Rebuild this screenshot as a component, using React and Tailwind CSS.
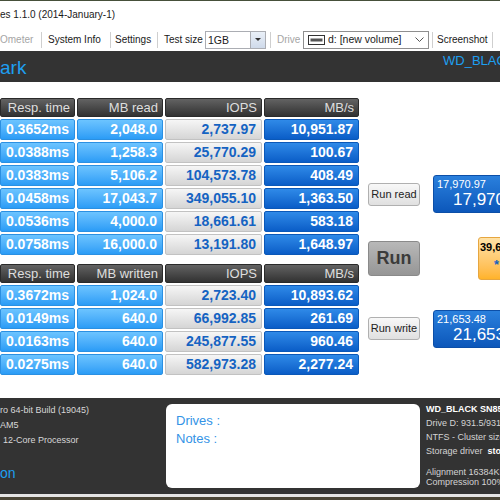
const readRows = [
  ['0.3652ms', '2,048.0', '2,737.97', '10,951.87'],
  ['0.0388ms', '1,258.3', '25,770.29', '100.67'],
  ['0.0383ms', '5,106.2', '104,573.78', '408.49'],
  ['0.0458ms', '17,043.7', '349,055.10', '1,363.50'],
  ['0.0536ms', '4,000.0', '18,661.61', '583.18'],
  ['0.0758ms', '16,000.0', '13,191.80', '1,648.97'],
];

const writeRows = [
  ['0.3672ms', '1,024.0', '2,723.40', '10,893.62'],
  ['0.0149ms', '640.0', '66,992.85', '261.69'],
  ['0.0163ms', '640.0', '245,877.55', '960.46'],
  ['0.0275ms', '640.0', '582,973.28', '2,277.24'],
];

const cellBase = 'h-[21px] flex items-center justify-end pr-[5px] rounded-[2px] border text-[14px] font-bold';
const cellStyles = [
  'bg-linear-to-b from-[#6cc4ff] to-[#2a9cf6] border-[#2b90e2] text-white',
  'bg-linear-to-b from-[#6cc4ff] to-[#2a9cf6] border-[#2b90e2] text-white',
  'bg-linear-to-b from-[#f6f6f6] to-[#d5d5d5] border-[#c2c2c2] text-[#1563c2]',
  'bg-linear-to-b from-[#2f8ae8] to-[#0a5dc7] border-[#0b58b8] text-white',
];

function Sep() {
  return <div className="w-px h-[16px] bg-[#cfcfcf] shrink-0" />;
}

function ResultTable({ headers, rows }) {
  return (
    <div className="grid grid-cols-[75px_86px_97px_95px] gap-x-[2px] gap-y-[2px]">
      {headers.map((h) => (
        <div
          key={h}
          className="h-[19px] flex items-center justify-end pr-[4px] rounded-[2px] border border-[#2a2a2a] bg-linear-to-b from-[#636363] to-[#323232] text-[13px] text-[#dedede]"
        >
          {h}
        </div>
      ))}
      {rows.map((row, i) =>
        row.map((v, j) => (
          <div key={i + '-' + j} className={cellBase + ' ' + cellStyles[j]}>
            {v}
          </div>
        ))
      )}
    </div>
  );
}

function SmallButton({ label }) {
  return (
    <div className="w-[52px] h-[23px] shrink-0 flex items-center justify-center rounded-[3px] border border-[#b0b0b0] bg-linear-to-b from-[#f8f8f8] to-[#e0e0e0] text-[11px] text-[#222]">
      {label}
    </div>
  );
}

function ScoreBox({ value }) {
  return (
    <div className="w-[120px] h-[38px] shrink-0 ml-[13px] rounded-[3px] border border-[#0c4fa8] bg-linear-to-b from-[#2a80dd] to-[#0c57ba] text-white">
      <div className="text-[11px] leading-none pl-[3px] pt-[3px]">{value}</div>
      <div className="text-[17px] leading-none pl-[19px] pt-[1px]">{value}</div>
    </div>
  );
}

export default function App() {
  return (
    <div className="w-[500px] h-[500px] overflow-hidden bg-white flex flex-col font-['Liberation_Sans',Arial,sans-serif]">
      <div className="h-[1px] bg-[#46503a] shrink-0" />

      {/* title bar */}
      <div className="h-[27px] shrink-0 flex items-center text-[10px] text-[#1a1a1a] whitespace-nowrap">
        es 1.1.0 (2014-January-1)
      </div>

      {/* toolbar */}
      <div className="h-[23px] shrink-0 flex items-center text-[10px] text-[#1a1a1a] whitespace-nowrap">
        <span className="w-[41px] shrink-0 text-[#a5a5a5]">Ometer</span>
        <Sep />
        <span className="w-[68px] shrink-0 pl-[6px]">System Info</span>
        <Sep />
        <span className="w-[46px] shrink-0 pl-[4px]">Settings</span>
        <Sep />
        <span className="w-[47px] shrink-0 pl-[6px]">Test size</span>
        <div className="w-[61px] h-[18px] shrink-0 flex border border-[#abadb3] bg-white">
          <span className="flex-1 pl-[2px] text-[10.5px] leading-[16px]">1GB</span>
          <div className="w-[15px] flex items-center justify-center border-l border-[#abadb3] bg-linear-to-b from-[#eaf0f8] to-[#cfdaea]">
            <div className="w-0 h-0 border-l-[3px] border-r-[3px] border-t-[3px] border-l-transparent border-r-transparent border-t-[#333]" />
          </div>
        </div>
        <div className="w-[4px] shrink-0" />
        <Sep />
        <span className="w-[32px] shrink-0 pl-[6px] text-[#a5a5a5]">Drive</span>
        <div className="w-[126px] h-[18px] shrink-0 flex items-center border border-[#8f8f8f] bg-white">
          <svg width="17" height="10" viewBox="0 0 17 10" className="ml-[4px] shrink-0">
            <rect x="0.5" y="0.5" width="16" height="9" fill="#fff" stroke="#333" />
            <rect x="2.5" y="3.5" width="12" height="3" fill="#555" />
          </svg>
          <span className="ml-[3px] flex-1 text-[10.5px]">d: [new volume]</span>
          <svg width="9" height="6" viewBox="0 0 9 6" className="mr-[4px] shrink-0">
            <path d="M0.5 0.5 L4.5 4.5 L8.5 0.5" fill="none" stroke="#555" strokeWidth="1" />
          </svg>
        </div>
        <div className="w-[3px] shrink-0" />
        <Sep />
        <span className="w-[59px] shrink-0 pl-[4px]">Screenshot</span>
        <Sep />
      </div>

      {/* dark header */}
      <div className="h-[31px] shrink-0 bg-[#333333] flex items-start whitespace-nowrap">
        <div className="w-[443px] shrink-0 self-center text-[19px] leading-none text-[#1e9ff0] pt-[1px]">ark</div>
        <div className="shrink-0 text-[13px] leading-none text-[#1e9ff0] pt-[3px]">WD_BLACK SN850X</div>
      </div>

      {/* main */}
      <div className="h-[316px] shrink-0 flex pt-[16px]">
        <div className="w-[360px] shrink-0 flex flex-col gap-[9px]">
          <ResultTable headers={['Resp. time', 'MB read', 'IOPS', 'MB/s']} rows={readRows} />
          <ResultTable headers={['Resp. time', 'MB written', 'IOPS', 'MB/s']} rows={writeRows} />
        </div>

        <div className="w-[140px] shrink-0 overflow-hidden flex flex-col pl-[8px]">
          <div className="mt-[77px] h-[38px] flex items-center">
            <SmallButton label="Run read" />
            <ScoreBox value="17,970.97" />
          </div>
          <div className="mt-[24px] h-[43px] flex items-center">
            <div className="w-[52px] h-[35px] shrink-0 flex items-center justify-center rounded-[3px] border border-[#8a8a8a] bg-linear-to-b from-[#b8b8b8] to-[#969696] text-[18px] font-bold text-[#3b3b3b]">
              Run
            </div>
            <div className="w-[100px] h-[43px] shrink-0 ml-[58px] rounded-[3px] border border-[#e6a640] bg-linear-to-b from-[#ffe2a6] to-[#ffb328]">
              <div className="text-[11px] font-bold leading-none text-black pl-[1px] pt-[4px] whitespace-nowrap">39,624.45</div>
              <div className="text-[13px] font-bold leading-none text-[#1560c0] pl-[15px] pt-[5px]">*</div>
            </div>
          </div>
          <div className="mt-[29px] h-[39px] flex items-center">
            <SmallButton label="Run write" />
            <ScoreBox value="21,653.48" />
          </div>
        </div>
      </div>

      {/* footer */}
      <div className="h-[96px] shrink-0 bg-[#333333] flex whitespace-nowrap">
        <div className="w-[166px] shrink-0 flex flex-col pt-[5px] text-[9px] leading-[15px] text-[#d8d8d8]">
          <span>ro 64-bit Build (19045)</span>
          <span>AM5</span>
          <span className="pl-[3px]">12-Core Processor</span>
          <span className="mt-[18px] text-[14px] text-[#1e9ff0]">on</span>
        </div>
        <div className="w-[254px] h-[84px] mt-[6px] shrink-0 rounded-[6px] bg-white pl-[10px] pt-[8px] text-[13px] leading-[18px] text-[#3393e6]">
          <div>Drives :</div>
          <div>Notes :</div>
        </div>
        <div className="ml-[6px] shrink-0 flex flex-col pt-[4px] text-[9px] text-[#d4d4d4]">
          <div className="leading-[14px] font-bold text-white">WD_BLACK SN850X</div>
          <div className="leading-[14px]">Drive D: 931.5/931.5 GB</div>
          <div className="leading-[14px]">NTFS - Cluster size 4096B</div>
          <div className="leading-[14px]">
            Storage driver&nbsp;&nbsp;<span className="font-bold text-white">stornvme</span>
          </div>
          <div className="leading-[10px] mt-[9px]">Alignment 16384KB OK</div>
          <div className="leading-[10px]">Compression 100% (Incompressible)</div>
        </div>
      </div>

      <div className="h-[3px] shrink-0 bg-[#e4e4e4]" />
      <div className="flex-1 bg-[#4a4536]" />
    </div>
  );
}
